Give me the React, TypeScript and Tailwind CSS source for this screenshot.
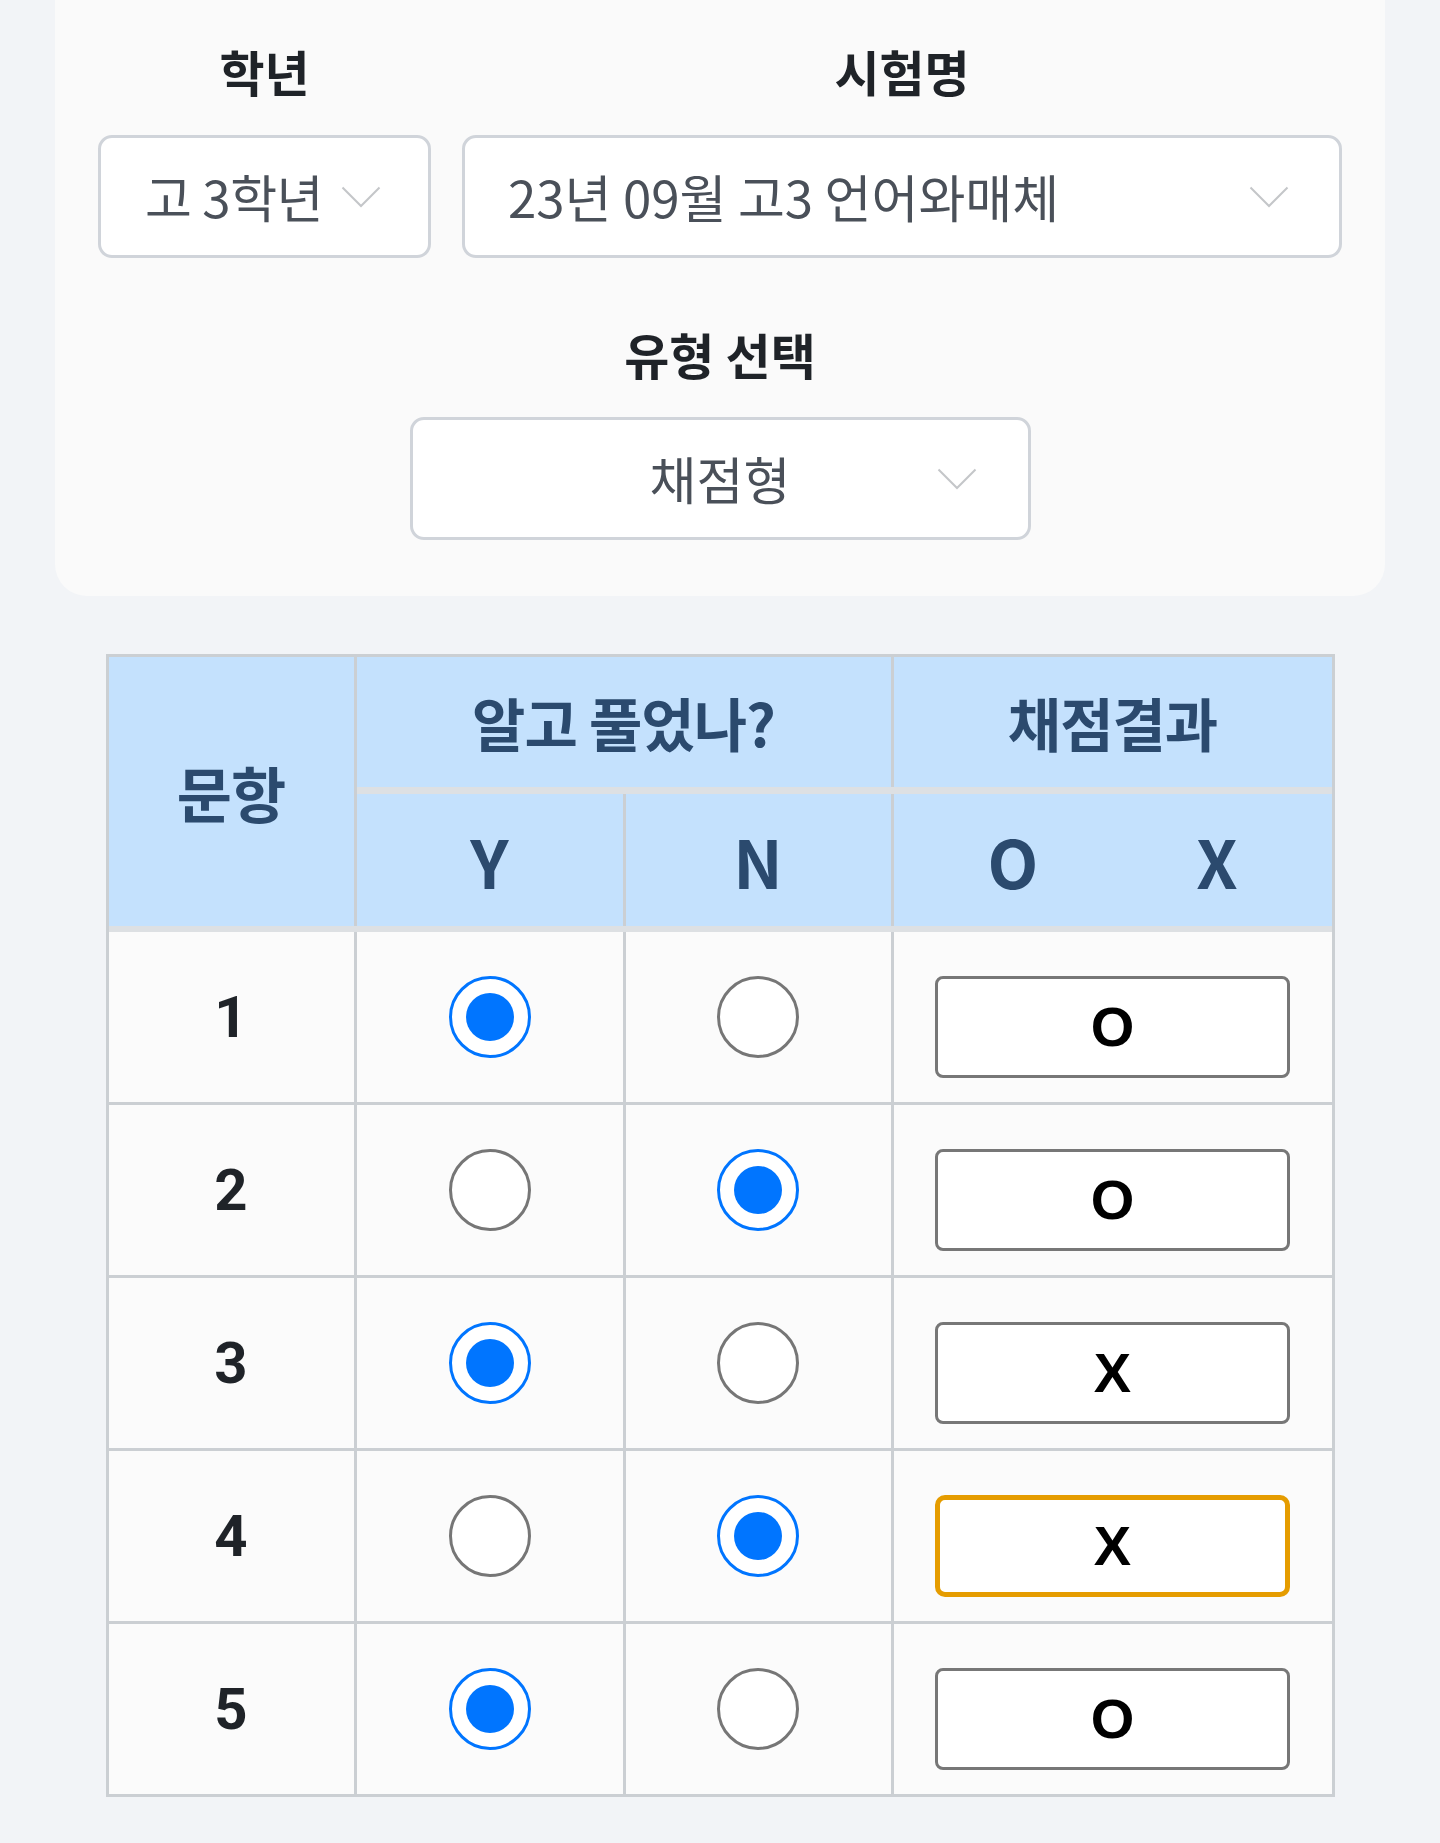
import React from 'react';

const ko = "font-['Noto_Sans_CJK_KR',sans-serif]";

type Row = { n: number; known: 'Y' | 'N'; result: 'O' | 'X'; flagged?: boolean };

const rows: Row[] = [
  { n: 1, known: 'Y', result: 'O' },
  { n: 2, known: 'N', result: 'O' },
  { n: 3, known: 'Y', result: 'X' },
  { n: 4, known: 'N', result: 'X', flagged: true },
  { n: 5, known: 'Y', result: 'O' },
];

function Chevron() {
  return (
    <svg width="40" height="22" viewBox="0 0 40 22" fill="none" className="shrink-0">
      <path d="M1.5 1.5 L20 20 L38.5 1.5" stroke="#c4c6c9" strokeWidth="2" />
    </svg>
  );
}

function Radio({ checked }: { checked: boolean }) {
  if (checked) {
    return (
      <div className="w-[82px] h-[82px] rounded-full border-[3px] border-[#0075ff] bg-white flex items-center justify-center">
        <div className="w-[48px] h-[48px] rounded-full bg-[#0075ff]" />
      </div>
    );
  }
  return <div className="w-[82px] h-[82px] rounded-full border-[3px] border-[#767676] bg-white" />;
}

function Label({ children }: { children: React.ReactNode }) {
  return (
    <div className={`${ko} text-[49px] leading-[56px] font-bold text-[#1f2328] text-center`}>{children}</div>
  );
}

export default function App() {
  return (
    <div className="min-h-screen bg-[#f2f4f7] pb-[49px]">
      {/* filter card */}
      <div className="w-[1330px] mx-auto bg-[#fafafa] rounded-b-[32px] px-[43px] pt-[43px] pb-[56px]">
        <div className="flex gap-[31px]">
          <div className="w-[333px] flex flex-col gap-[36px]">
            <Label>학년</Label>
            <div className="h-[123px] rounded-[14px] border-[3px] border-[#d0d4da] bg-white flex items-center pl-[44px] pr-[38px] gap-[18px]">
              <span className={`${ko} text-[51px] text-[#4a5059] whitespace-nowrap tracking-[-0.5px]`}>고 3학년</span>
              <Chevron />
            </div>
          </div>
          <div className="flex-1 flex flex-col gap-[36px]">
            <Label>시험명</Label>
            <div className="h-[123px] rounded-[14px] border-[3px] border-[#d0d4da] bg-white flex items-center justify-between pl-[43px] pr-[50px]">
              <span className={`${ko} text-[51px] text-[#4a5059] whitespace-nowrap`}>23년 09월 고3 언어와매체</span>
              <Chevron />
            </div>
          </div>
        </div>

        <div className="mt-[68px] flex flex-col items-center gap-[35px]">
          <Label>유형 선택</Label>
          <div className="relative w-[621px] h-[123px] rounded-[14px] border-[3px] border-[#d0d4da] bg-white flex items-center justify-center">
            <span className={`${ko} text-[51px] text-[#4a5059]`}>채점형</span>
            <div className="absolute right-[51px] top-1/2 -translate-y-1/2 flex">
              <Chevron />
            </div>
          </div>
        </div>
      </div>

      {/* answer table */}
      <div className="w-[1229px] mx-auto mt-[58px] border-[3px] border-[#cbcfd3] bg-[#cbcfd3]">
        <div
          className={`${ko} grid grid-cols-[245px_266px_265px_438px] grid-rows-[130px_7px_132px] gap-x-[3px] font-bold text-[#2b4a6e]`}
        >
          <div className="row-span-3 bg-[#c4e1fd] flex items-center justify-center text-[60px] tracking-[-1px]">문항</div>
          <div className="col-span-2 bg-[#c4e1fd] flex items-center justify-center text-[58px] tracking-[-1px]">
            알고 풀었나?
          </div>
          <div className="bg-[#c4e1fd] flex items-center justify-center text-[58px] tracking-[-1px]">채점결과</div>
          <div className="col-span-3 bg-[#dde0e3]" />
          <div className="bg-[#c4e1fd] flex items-center justify-center text-[66px]">Y</div>
          <div className="bg-[#c4e1fd] flex items-center justify-center text-[66px]">N</div>
          <div className="bg-[#c4e1fd] flex items-center justify-center gap-[158px] text-[66px]">
            <span>O</span>
            <span>X</span>
          </div>
        </div>
        <div className="h-[6px] bg-[#dde0e3]" />
        <div className="grid grid-cols-[245px_266px_265px_438px] auto-rows-[170px] gap-[3px]">
          {rows.map((r) => (
            <React.Fragment key={r.n}>
              <div className="bg-[#fbfbfb] flex items-center justify-center font-['Roboto',sans-serif] font-bold text-[58px] text-[#1f2328]">
                {r.n}
              </div>
              <div className="bg-[#fbfbfb] flex items-center justify-center">
                <Radio checked={r.known === 'Y'} />
              </div>
              <div className="bg-[#fbfbfb] flex items-center justify-center">
                <Radio checked={r.known === 'N'} />
              </div>
              <div className="bg-[#fbfbfb] flex items-center justify-center">
                <div
                  className={`mt-[20px] w-[355px] h-[102px] bg-white flex items-center justify-center font-['Liberation_Sans',Arial,sans-serif] font-bold text-[56px] text-black ${
                    r.flagged ? 'border-[5px] border-[#e59c00] rounded-[10px]' : 'border-[3px] border-[#777777] rounded-[8px]'
                  }`}
                >
                  {r.result}
                </div>
              </div>
            </React.Fragment>
          ))}
        </div>
      </div>
    </div>
  );
}
